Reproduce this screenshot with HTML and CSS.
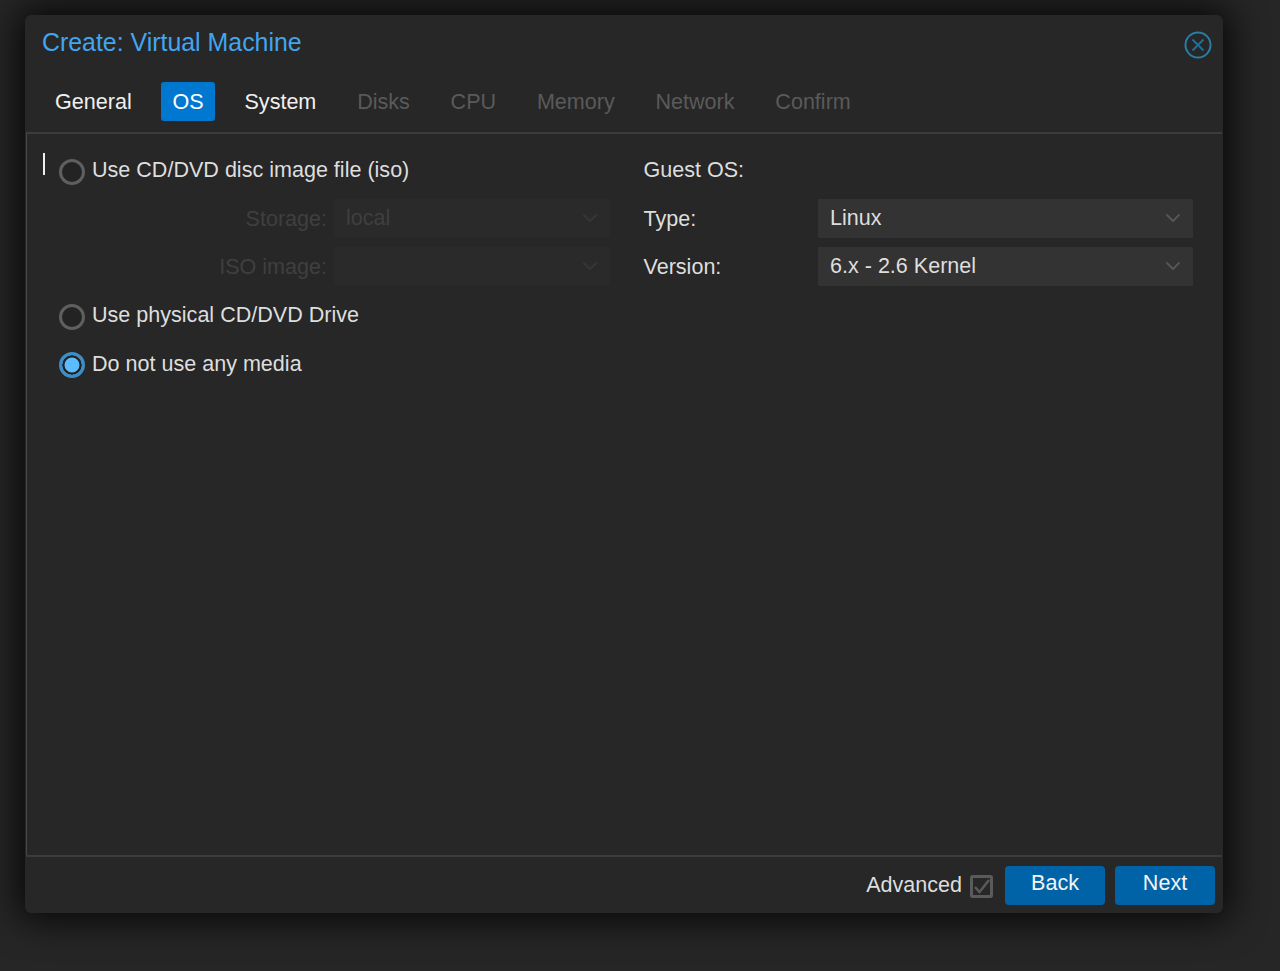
FILE: index.html
```html
<!DOCTYPE html>
<html lang="en">
<head>
  <meta charset="UTF-8">
  <title>Create: Virtual Machine</title>
  <link rel="stylesheet" href="styles.css">
</head>
<body>
  <div class="window">
    <header class="window-head">
      <h1>Create: Virtual Machine</h1>
      <svg class="close" viewBox="0 0 28 28" width="28" height="28">
        <circle cx="14" cy="14" r="12.5"/>
        <path d="M8.5 8.5 L19.5 19.5 M19.5 8.5 L8.5 19.5"/>
      </svg>
    </header>

    <nav class="tabs">
      <span class="tab">General</span>
      <span class="tab active">OS</span>
      <span class="tab">System</span>
      <span class="tab off">Disks</span>
      <span class="tab off">CPU</span>
      <span class="tab off">Memory</span>
      <span class="tab off">Network</span>
      <span class="tab off">Confirm</span>
    </nav>

    <main class="panel">
      <span class="caret"></span>
      <section class="col col-media">
        <div class="row"><span class="radio"></span><span>Use CD/DVD disc image file (iso)</span></div>
        <div class="row sub">
          <label>Storage:</label>
          <div class="select dim">local<svg class="chev" viewBox="0 0 16 10" width="16" height="10"><path d="M1.5 1.5 L8 8 L14.5 1.5"/></svg></div>
        </div>
        <div class="row sub">
          <label>ISO image:</label>
          <div class="select dim"><svg class="chev" viewBox="0 0 16 10" width="16" height="10"><path d="M1.5 1.5 L8 8 L14.5 1.5"/></svg></div>
        </div>
        <div class="row"><span class="radio"></span><span>Use physical CD/DVD Drive</span></div>
        <div class="row"><span class="radio checked"></span><span>Do not use any media</span></div>
      </section>

      <section class="col col-guest">
        <div class="row"><span>Guest OS:</span></div>
        <div class="row">
          <label>Type:</label>
          <div class="select">Linux<svg class="chev" viewBox="0 0 16 10" width="16" height="10"><path d="M1.5 1.5 L8 8 L14.5 1.5"/></svg></div>
        </div>
        <div class="row">
          <label>Version:</label>
          <div class="select">6.x - 2.6 Kernel<svg class="chev" viewBox="0 0 16 10" width="16" height="10"><path d="M1.5 1.5 L8 8 L14.5 1.5"/></svg></div>
        </div>
      </section>
    </main>

    <footer class="window-foot">
      <span class="adv">Advanced</span>
      <svg class="check" viewBox="0 0 23 23" width="23" height="23">
        <rect x="1.5" y="1.5" width="20" height="20" rx="1"/>
        <path d="M5 12 L9.5 17 L19 5"/>
      </svg>
      <button class="btn">Back</button>
      <button class="btn">Next</button>
    </footer>
  </div>
</body>
</html>
```

FILE: styles.css
```css
* {
  box-sizing: border-box;
}
html, body {
  height: 100%;
}
body {
  margin: 0;
  padding: 15px 57px 0 25px;
  overflow: hidden;
  background: #262626;
  color: #dedede;
  font-family: "Liberation Sans", Arial, sans-serif;
  font-size: 21.55px;
}
.window {
  display: flex;
  flex-direction: column;
  height: 898px;
  padding: 0 1px;
  background: #272727;
  border-radius: 6px;
  box-shadow: 0 0 36px 6px rgba(0,0,0,0.85);
}
.window-head {
  display: flex;
  justify-content: space-between;
  height: 57px;
  padding: 12px 10px 0 16px;
}
.window-head h1 {
  margin: 0;
  color: #42a5f0;
  font-size: 24.9px;
  font-weight: normal;
  line-height: 30px;
}
.close {
  margin-top: 4px;
}
.close circle {
  fill: none;
  stroke: #287ea6;
  stroke-width: 2;
}
.close path {
  fill: none;
  stroke: #1f6f96;
  stroke-width: 2;
}
.tabs {
  display: flex;
  gap: 17.8px;
  height: 60px;
  padding: 10px 0 0 17.6px;
}
.tab {
  height: 39px;
  padding: 0 11.5px;
  border-radius: 3px;
  line-height: 40px;
  color: #f0f0f0;
}
.tab.active {
  background: #0078d0;
  color: #fff;
}
.tab.off {
  color: #5a5a5a;
}
.panel {
  position: relative;
  flex: 1;
  display: flex;
  padding: 16.2px 29px 0 32px;
  border-top: 2px solid #3c3c3c;
  border-left: 1px solid #484848;
}
.caret {
  position: absolute;
  left: 16px;
  top: 19px;
  width: 2px;
  height: 22px;
  background: #eee;
}
.col-media {
  width: 551px;
}
.col-guest {
  flex: 1;
  margin-left: 33.5px;
}
.row {
  display: flex;
  align-items: center;
  height: 40px;
  margin-bottom: 8.4px;
}
.radio {
  flex: none;
  width: 26px;
  height: 26px;
  margin: 3px 7px 0 0;
  border: 3px solid #5f5f5f;
  border-radius: 50%;
  background: #232323;
}
.radio.checked {
  border-color: #3c8ec8;
  background: #5cbcff;
  box-shadow: inset 0 0 0 2.5px #232323;
}
label {
  flex: none;
  width: 174.5px;
}
.sub {
  justify-content: flex-end;
}
.sub label {
  width: auto;
  margin-right: 7px;
  color: #3f3f3f;
}
.select {
  display: flex;
  align-items: center;
  flex: 1;
  height: 39px;
  margin-bottom: 1px;
  padding: 0 12px;
  background: #333;
  border-radius: 1px;
}
.sub .select {
  flex: none;
  width: 276px;
}
.chev {
  margin-left: auto;
}
.chev path {
  fill: none;
  stroke: #555;
  stroke-width: 2;
}
.select.dim {
  background: #2a2a2a;
  color: #3f3f3f;
}
.dim .chev path {
  stroke: #363636;
}
.window-foot {
  display: flex;
  align-items: center;
  justify-content: flex-end;
  height: 58px;
  padding: 0 7px 0 0;
  border-top: 2px solid #3c3c3c;
}
.adv {
  margin-right: 8px;
}
.check {
  margin: 3px 12px 0 0;
}
.check rect {
  fill: none;
  stroke: #5a5a5a;
  stroke-width: 3;
}
.check path {
  fill: none;
  stroke: #5a5a5a;
  stroke-width: 2.5;
}
.btn {
  width: 100px;
  height: 39px;
  margin-left: 10px;
  padding: 0 0 4px;
  border: none;
  border-radius: 4px;
  background: #0063a8;
  color: #f4f4f4;
  font: inherit;
}
.check + .btn {
  margin-left: 0;
}
```
